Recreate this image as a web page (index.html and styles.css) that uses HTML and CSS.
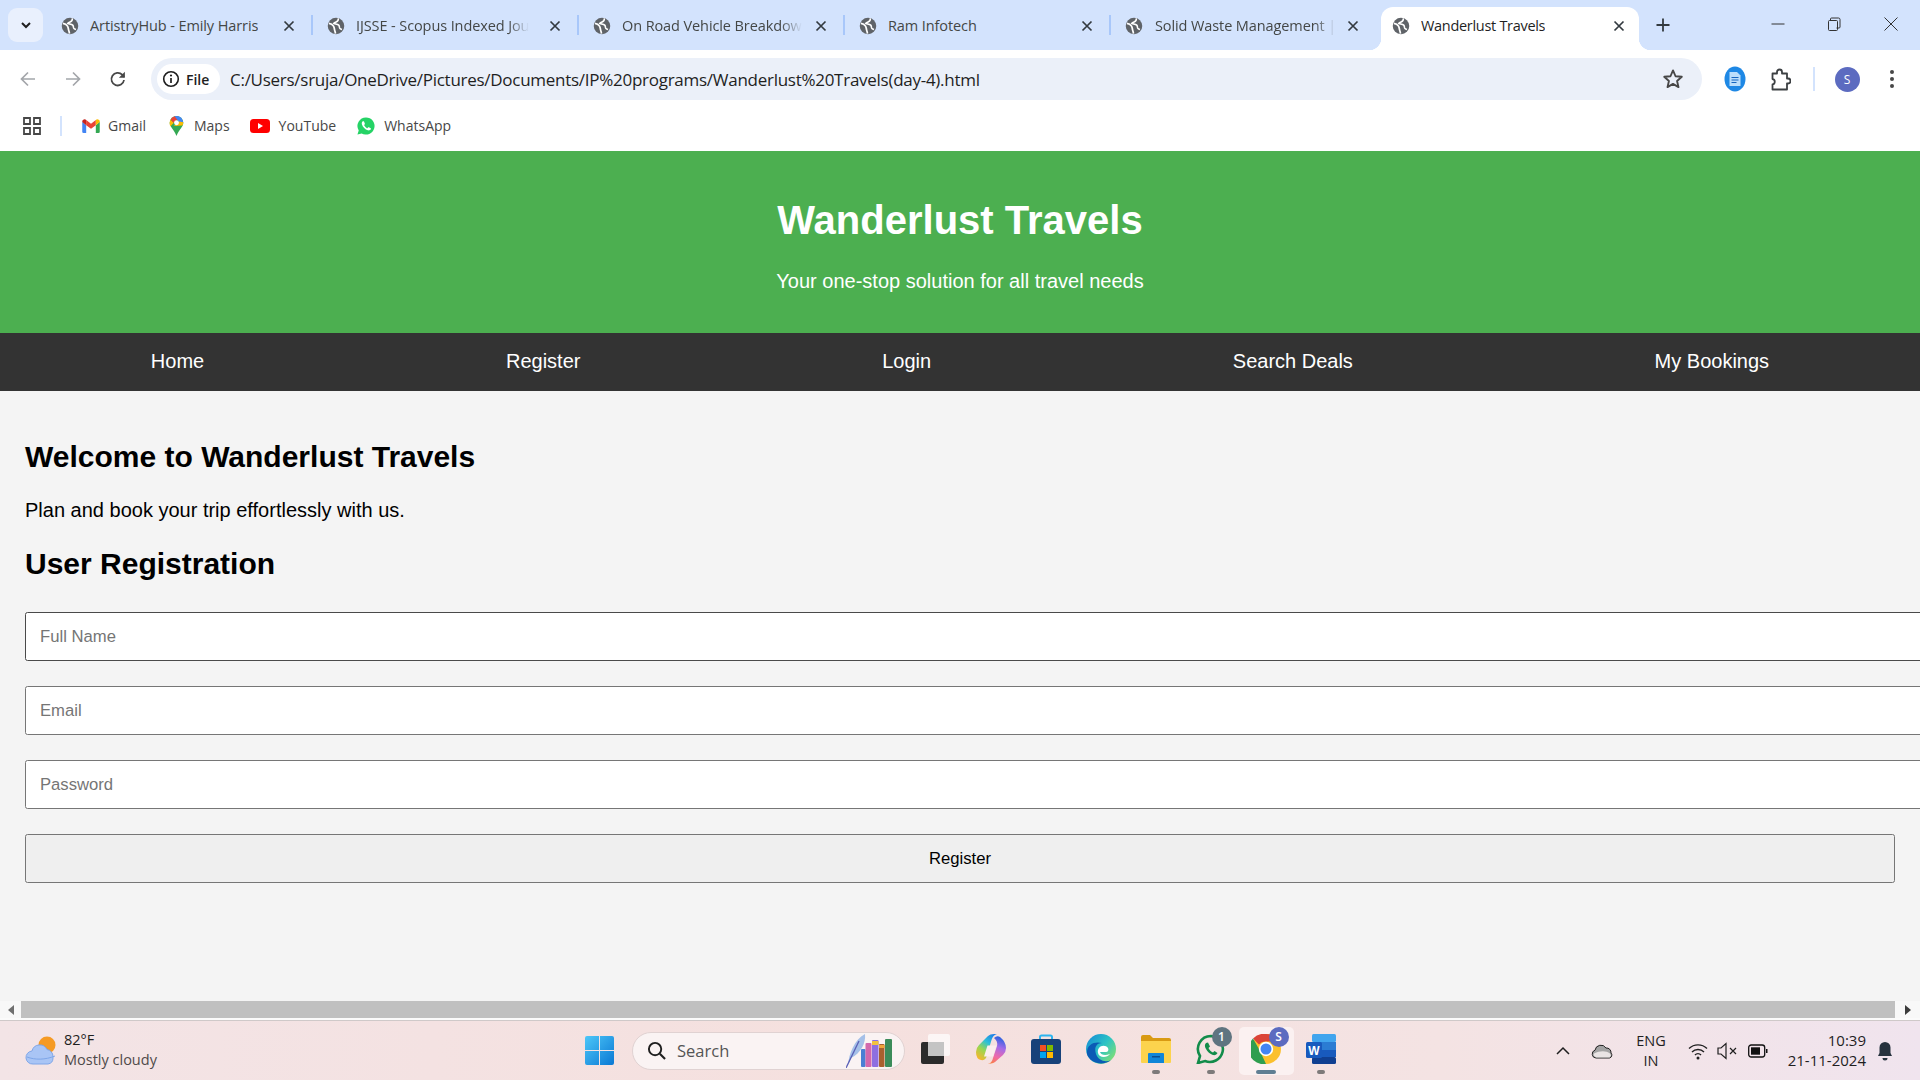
FILE: index.html
```html
<!DOCTYPE html>
<html lang="en">
<head>
<meta charset="utf-8">
<title>Wanderlust Travels</title>
<link rel="stylesheet" href="styles.css">
</head>
<body>
<svg class="sprite" aria-hidden="true">
  <symbol id="globe" viewBox="0 0 24 24">
    <circle cx="12" cy="12" r="11" fill="#5f6368"/>
    <path d="M2.500 8.500c3 .2 5 1.600 6.200 3.600 1 1.700 1 3.400 1.400 5 .3 1.400 1 3 1.200 5" fill="none" stroke="#fff" stroke-width="2.300"/>
    <path d="M15 1.800c.4 2.200-.6 3.700-2.300 4.600-1.500.8-3.200 1-3.700 2.300 2.500.8 5.200.8 6.600 2.200 1 1 .8 2.600 1.300 3.800.7 1.200 2 1.600 3.100 2" fill="none" stroke="#fff" stroke-width="2.100"/>
  </symbol>
  <symbol id="x" viewBox="0 0 12 12">
    <path d="M1.500 1.500l9 9m0-9l-9 9" stroke="#333a40" stroke-width="1.700" fill="none"/>
  </symbol>
</svg>

<div class="tabbar">
  <div class="tab-menu">
    <svg class="ico-10" viewBox="0 0 12 12"><path d="M2 4l4 4 4-4" fill="none" stroke="#1f1f1f" stroke-width="2"/></svg>
  </div>
  <div class="tab">
    <svg class="globe"><use href="#globe"/></svg><span class="tab-title">ArtistryHub - Emily Harris</span><svg class="tab-x"><use href="#x"/></svg>
  </div>
  <div class="tab">
    <svg class="globe"><use href="#globe"/></svg><span class="tab-title fade">IJSSE - Scopus Indexed Jou</span><svg class="tab-x"><use href="#x"/></svg>
  </div>
  <div class="tab">
    <svg class="globe"><use href="#globe"/></svg><span class="tab-title fade">On Road Vehicle Breakdow</span><svg class="tab-x"><use href="#x"/></svg>
  </div>
  <div class="tab">
    <svg class="globe"><use href="#globe"/></svg><span class="tab-title">Ram Infotech</span><svg class="tab-x"><use href="#x"/></svg>
  </div>
  <div class="tab no-sep">
    <svg class="globe"><use href="#globe"/></svg><span class="tab-title fade">Solid Waste Management |</span><svg class="tab-x"><use href="#x"/></svg>
  </div>
  <div class="tab tab-active">
    <svg class="globe"><use href="#globe"/></svg><span class="tab-title">Wanderlust Travels</span><svg class="tab-x"><use href="#x"/></svg>
  </div>
  <div class="new-tab">
    <svg class="ico-14" viewBox="0 0 14 14"><path d="M7 .5v13M.5 7h13" stroke="#333a40" stroke-width="1.800" fill="none"/></svg>
  </div>
  <div class="win-controls">
    <div class="win-btn"><svg class="ico-14" viewBox="0 0 14 14"><path d="M.500 7h13" stroke="#333" stroke-width="1"/></svg></div>
    <div class="win-btn"><svg class="ico-14" viewBox="0 0 14 14"><path d="M1.500 4.500a1 1 0 011-1h7a1 1 0 011 1v8a1 1 0 01-1 1h-7a1 1 0 01-1-1zM3.500 3.500v-1.500a1 1 0 011-1h7a1.500 1.500 0 011.500 1.500v7.500a1 1 0 01-1 1h-2.500" fill="none" stroke="#333" stroke-width="1"/></svg></div>
    <div class="win-btn"><svg class="ico-14" viewBox="0 0 14 14"><path d="M.500.500l13 13m0-13l-13 13" stroke="#333" stroke-width="1" fill="none"/></svg></div>
  </div>
</div>

<div class="toolbar">
  <div class="tool-btn"><svg class="ico-18" viewBox="0 0 18 18"><path d="M16 9H3m6-6.500L2.500 9 9 15.500" fill="none" stroke="#a3a6aa" stroke-width="1.700"/></svg></div>
  <div class="tool-btn"><svg class="ico-18" viewBox="0 0 18 18"><path d="M2 9h13M9 2.500L15.500 9 9 15.500" fill="none" stroke="#a3a6aa" stroke-width="1.700"/></svg></div>
  <div class="tool-btn"><svg class="ico-18" viewBox="0 0 18 18"><path d="M15 10a6.300 6.300 0 11-1.800-5.300L15.200 6.800" fill="none" stroke="#474747" stroke-width="1.800"/><path d="M15.900 1.800v6h-6z" fill="#474747"/></svg></div>
  <div class="omnibox">
    <div class="chip">
      <svg class="ico-18" viewBox="0 0 18 18"><circle cx="9" cy="9" r="7.300" fill="none" stroke="#1f1f1f" stroke-width="1.600"/><path d="M9 8v5" stroke="#1f1f1f" stroke-width="1.700"/><circle cx="9" cy="5.500" r="1.100" fill="#1f1f1f"/></svg>
      <span class="chip-text">File</span>
    </div>
    <span class="url">C:/Users/sruja/OneDrive/Pictures/Documents/IP%20programs/Wanderlust%20Travels(day-4).html</span>
    <svg class="star" viewBox="0 0 20 20"><path d="M10 2.200l2.300 5.300 5.700.5-4.300 3.800 1.300 5.600-5-3-5 3 1.300-5.600L2 8l5.700-.5z" fill="none" stroke="#474747" stroke-width="1.700" stroke-linejoin="round"/></svg>
  </div>
  <div class="tool-btn wide"><svg class="ext-doc" viewBox="0 0 22 26"><ellipse cx="11" cy="13" rx="10.500" ry="12.500" fill="#1e88e5"/><path d="M5.500 6h7.500l3.500 3.500V20h-11z" fill="#bbdefb"/><path d="M7.500 11.500h7M7.500 14h7M7.500 16.500h5" stroke="#1565c0" stroke-width="1.200"/></svg></div>
  <div class="tool-btn wide"><svg class="ext-puzzle" viewBox="0 0 20 24"><path d="M1.500 6.500h4.500v-1.500a2.500 2.500 0 015 0v1.500h5v5h1a2.500 2.500 0 010 5h-1v6h-14.500v-5a2.800 2.800 0 000-5.500z" fill="none" stroke="#3c4043" stroke-width="1.800" stroke-linejoin="round"/></svg></div>
  <div class="tool-sep"></div>
  <div class="tool-btn wide"><span class="avatar">S</span></div>
  <div class="tool-btn menu"><svg class="ext-menu" viewBox="0 0 6 20"><circle cx="3" cy="3" r="2" fill="#474747"/><circle cx="3" cy="10" r="2" fill="#474747"/><circle cx="3" cy="17" r="2" fill="#474747"/></svg></div>
</div>

<div class="bookmarks">
  <svg class="apps" viewBox="0 0 18 18"><path d="M1 1h6v6H1zM11 1h6v6h-6zM1 11h6v6H1zM11 11h6v6h-6z" fill="none" stroke="#474747" stroke-width="1.800"/></svg>
  <div class="bm-sep"></div>
  <div class="bm bm-gmail">
    <svg class="bm-ico" viewBox="0 0 20 16"><path d="M0 3v11.500A1.500 1.500 0 001.500 16H4.500V7z" fill="#4285f4"/><path d="M20 3v11.500a1.500 1.500 0 01-1.500 1.500H15.500V7z" fill="#34a853"/><path d="M15.500 1L10 5.500 4.500 1v6L10 11l5.500-4z" fill="#ea4335"/><path d="M0 3c0-2.500 3-3.500 4.500-2v6L0 3.500z" fill="#c5221f"/><path d="M20 3c0-2.500-3-3.500-4.500-2v6L20 3.500z" fill="#fbbc04"/></svg>
    <span>Gmail</span>
  </div>
  <div class="bm bm-maps">
    <svg class="bm-ico-maps" viewBox="0 0 16 22"><path d="M8 0a7.500 7.500 0 00-7.500 7.500c0 4.500 4.800 7.500 7.500 14.500 2.700-7 7.500-10 7.500-14.500A7.500 7.500 0 008 0z" fill="#34a853"/><path d="M1.500 4L5 7.500l-3.800 4C.7 10.400.5 9 .5 7.500c0-1.300.4-2.500 1-3.500z" fill="#fbbc04"/><path d="M1.500 4A7.500 7.500 0 016 .3L10 3.500 5 7.500z" fill="#ea4335"/><path d="M6 .3A7.500 7.500 0 0115.500 7L11 6.500 8 3z" fill="#4285f4"/><path d="M15.500 7c0 1.300-.4 2.500-1 3.500L5 11l6-5z" fill="#fbbc04"/><circle cx="8" cy="7.500" r="2.700" fill="#fff"/></svg>
    <span>Maps</span>
  </div>
  <div class="bm bm-yt">
    <svg class="bm-ico-yt" viewBox="0 0 20 14"><rect width="20" height="14" rx="3.500" fill="#f00"/><path d="M8 4l5 3-5 3z" fill="#fff"/></svg>
    <span>YouTube</span>
  </div>
  <div class="bm">
    <svg class="bm-ico-wa" viewBox="0 0 20 20"><path d="M10 .5a9.500 9.500 0 00-8.100 14.400L.5 19.500l4.700-1.300A9.500 9.500 0 1010 .5z" fill="#25d366"/><path d="M6.500 4.800c-1 .8-1.500 2-1 3.500 1 3 3.500 5.500 6.500 6.500 1.500.4 2.800-.2 3.400-1.200.3-.6.2-1-.2-1.200l-2-1c-.4-.2-.7 0-1 .4-.5.700-.8.700-1.500.300-1.200-.7-2-1.500-2.600-2.600-.3-.6-.2-.9.300-1.300.4-.4.5-.700.3-1.100l-.9-2c-.3-.500-.8-.5-1.300-.3z" fill="#fff"/></svg>
    <span>WhatsApp</span>
  </div>
</div>

<div class="page">
  <div class="doc">
    <header class="site-header">
      <h1>Wanderlust Travels</h1>
      <p>Your one-stop solution for all travel needs</p>
    </header>
    <nav class="site-nav">
      <a>Home</a><a>Register</a><a>Login</a><a>Search Deals</a><a>My Bookings</a>
    </nav>
    <main class="content">
      <h2 class="welcome">Welcome to Wanderlust Travels</h2>
      <p class="lead">Plan and book your trip effortlessly with us.</p>
      <h2 class="reg">User Registration</h2>
      <form class="form">
        <input class="field field-focus" type="text" placeholder="Full Name">
        <input class="field" type="email" placeholder="Email">
        <input class="field" type="password" placeholder="Password">
        <button class="submit" type="button">Register</button>
      </form>
    </main>
  </div>
</div>

<div class="hscroll">
  <div class="sb-arrow"><svg class="sb-ico" viewBox="0 0 6 10"><path d="M6 0v10L0 5z" fill="#6f6f6f"/></svg></div>
  <div class="sb-thumb"></div>
  <div class="sb-arrow sb-right"><svg class="sb-ico" viewBox="0 0 6 10"><path d="M0 0v10l6-5z" fill="#3c3c3c"/></svg></div>
</div>

<footer class="taskbar">
  <div class="weather">
    <svg class="weather-ico" viewBox="0 0 32 30"><circle cx="22" cy="9" r="8.500" fill="#f59a23"/><path d="M8 28a6.500 6.500 0 01-1-13 8 8 0 0115-1.500 7 7 0 016 7v1.500a6 6 0 01-5 6z" fill="#a9c5f5" stroke="#7ea6e8" stroke-width="1"/><path d="M2 21c8 3 18 3 28-1" fill="none" stroke="#7ea6e8" stroke-width="1"/></svg>
    <div class="weather-text"><span class="temp">82°F</span><span class="cond">Mostly cloudy</span></div>
  </div>
  <svg class="start" viewBox="0 0 29 29">
    <defs><linearGradient id="wing" x1="0" y1="0" x2="1" y2="1"><stop offset="0" stop-color="#4dc7f8"/><stop offset="1" stop-color="#0a78d4"/></linearGradient></defs>
    <path d="M2 0h12v14H0V2a2 2 0 012-2zM15 0h12a2 2 0 012 2v12H15zM0 15h14v14H2a2 2 0 01-2-2zM15 15h14v12a2 2 0 01-2 2H15z" fill="url(#wing)"/>
  </svg>
  <div class="searchbox">
    <svg class="search-ico" viewBox="0 0 20 20"><circle cx="8.500" cy="8.500" r="6.500" fill="none" stroke="#1f1f1f" stroke-width="2"/><path d="M13.500 13.500L19 19" stroke="#1f1f1f" stroke-width="2.200"/></svg>
    <span class="search-text">Search</span>
    <svg class="search-art" viewBox="0 0 46 34">
      <path d="M2 31C3 20 8 6 19 0c1 9-4 19-14 24z" fill="#a5c0e8"/><path d="M0 34L13 7" stroke="#5a5fb5" stroke-width="1.300" fill="none"/>
      <rect x="15" y="15" width="4.500" height="18" rx="1" fill="#4a7fd4"/><rect x="19.500" y="9" width="6" height="24" rx="1" fill="#d268ad"/>
      <rect x="26" y="6" width="6.500" height="27" rx="1" fill="#8e6fe0"/><rect x="26" y="7" width="6.500" height="4" fill="#f2c23e"/><rect x="33" y="10" width="5.500" height="23" rx="1" fill="#a8602e"/><rect x="33" y="11" width="5.500" height="3" fill="#f0a43a"/><rect x="39" y="5" width="7" height="28" rx="1" fill="#3b8c5a"/>
    </svg>
  </div>
  <div class="apps-row">
    <div class="app">
      <svg class="app-ico" viewBox="0 0 30 30"><rect x="0" y="8" width="23" height="22" rx="2" fill="#2b2b2b"/><rect x="7" y="0" width="22" height="22" rx="2" fill="#fff" fill-opacity=".7"/><rect x="7" y="8" width="16" height="14" fill="#c4c4c4"/></svg>
    </div>
    <div class="app">
      <svg class="app-ico" viewBox="0 0 30 30"><defs><linearGradient id="cp1" x1=".8" y1="0" x2=".2" y2="1"><stop offset="0" stop-color="#1f7fe8"/><stop offset=".35" stop-color="#2cc0d8"/><stop offset=".65" stop-color="#9ad650"/><stop offset="1" stop-color="#f9b52c"/></linearGradient><linearGradient id="cp2" x1=".6" y1="0" x2=".3" y2="1"><stop offset="0" stop-color="#2a62e0"/><stop offset=".35" stop-color="#a46be8"/><stop offset=".7" stop-color="#f06aa8"/><stop offset="1" stop-color="#f9803c"/></linearGradient></defs><path d="M12 2Q14 0 18 0h3q-4 1-5.500 6L11 21q-1 6-6 5-5-1-5-8 0-4 3-7l5-5z" fill="url(#cp1)"/><path d="M18 4q3-3 6-1 6 5 6 11 0 4-3 7l-8 7q-3 2-10 2h3q4-1 5-6l4-12q1-5-3-8z" fill="url(#cp2)"/><path d="M11.500 11.500h9l-3.500 11h-9z" fill="#fbeeee"/></svg>
    </div>
    <div class="app">
      <svg class="app-ico" viewBox="0 0 30 30"><path d="M9 6V3a1.500 1.500 0 011.500-1.500h9A1.500 1.500 0 0121 3v3" fill="none" stroke="#2db4ef" stroke-width="2"/><rect x="0" y="5" width="30" height="25" rx="3" fill="#17427a"/><rect x="9" y="11" width="6" height="6" fill="#f25022"/><rect x="16" y="11" width="6" height="6" fill="#7fba00"/><rect x="9" y="18" width="6" height="6" fill="#00a4ef"/><rect x="16" y="18" width="6" height="6" fill="#ffb900"/></svg>
    </div>
    <div class="app">
      <svg class="app-ico" viewBox="0 0 30 30"><defs><linearGradient id="ed1" x1="0" y1="0" x2="1" y2=".8"><stop offset="0" stop-color="#1487d8"/><stop offset=".55" stop-color="#2cc4c4"/><stop offset="1" stop-color="#84e070"/></linearGradient></defs><circle cx="15" cy="15" r="15" fill="url(#ed1)"/><path d="M1 20C0 10 9 7 16 9c-6 0-8 5-6 11 2 6 9 9 15 6-7 6-21 4-24-6z" fill="#0b5bb5"/><path d="M13 14c2-3 7-3 9 0 1 2 0 4-2 4h-6c1 3 5 4 10 2-3 4-11 4-12-1-.5-2 0-4 1-5z" fill="#fff"/></svg>
    </div>
    <div class="app">
      <svg class="app-ico" viewBox="0 0 30 30"><path d="M0 3a2 2 0 012-2h7l3 3h16a2 2 0 012 2v4H0z" fill="#d99a12"/><path d="M0 7h30v21a1 1 0 01-1 1H1a1 1 0 01-1-1z" fill="#fcd34d"/><path d="M8 19h14a1 1 0 011 1v9H7v-9a1 1 0 011-1z" fill="#1086d8"/><rect x="11" y="22" width="8" height="1.500" fill="#0b4e8f"/></svg>
      <span class="dot"></span>
    </div>
    <div class="app">
      <svg class="app-ico" viewBox="0 0 30 30"><path d="M15 2a13 13 0 00-11 20L2 29l7-2A13 13 0 1015 2z" fill="none" stroke="#128c4a" stroke-width="2.600"/><path d="M10 9c-1.500 1.500-1.500 3.500 0 6 1.500 3 4 5 7 6 2 .5 4-.5 4.500-2l-3-2-1.500 1.500c-2-1-3.500-2.500-4.500-4.500l1.500-1.500-2-4z" fill="#128c4a"/></svg>
      <span class="badge">1</span>
      <span class="dot"></span>
    </div>
    <div class="app app-active">
      <svg class="app-ico" viewBox="0 0 30 30"><circle cx="15" cy="15" r="15" fill="#fbc02d"/><path d="M15 0a15 15 0 0113 7.500H15A7.500 7.500 0 008 10.500L2 4.500A15 15 0 0115 0z" fill="#db4437"/><path d="M2 4.500l6.500 11.500 6.500 14A15 15 0 012 4.500z" fill="#2e9e4f"/><circle cx="15" cy="15" r="7.200" fill="#fff"/><circle cx="15" cy="15" r="5.500" fill="#4285f4"/></svg>
      <span class="badge badge-s">S</span>
      <span class="dot dot-long"></span>
    </div>
    <div class="app">
      <svg class="app-ico" viewBox="0 0 30 30"><rect x="6" y="0" width="24" height="8" rx="1.500" fill="#41a5ee"/><rect x="6" y="8" width="24" height="8" fill="#2b7cd3"/><rect x="6" y="16" width="24" height="7" fill="#185abd"/><rect x="6" y="23" width="24" height="7" rx="1.500" fill="#103f91"/><rect x="0" y="8" width="16" height="16" rx="1.500" fill="#185abd"/><text class="word-w" x="8" y="20.500" text-anchor="middle">W</text></svg>
      <span class="dot"></span>
    </div>
  </div>
  <div class="tray">
    <div class="tray-slot s-caret"><svg class="ico-14" viewBox="0 0 14 14"><path d="M1 10l6-6 6 6" fill="none" stroke="#1f1f1f" stroke-width="1.500"/></svg></div>
    <div class="tray-slot s-cloud"><svg class="tray-cloud" viewBox="0 0 22 16"><path d="M5 15a4 4 0 01-1-7.800 6 6 0 0111-2.200 4.500 4.500 0 015 5 3 3 0 01-1.500 5z" fill="#a3a3a3" stroke="#222" stroke-width="1"/><path d="M3 10.500c6-3 12-3 16 0l1 2-1.500 2H5l-2.500-2z" fill="#e9e4e4"/></svg></div>
    <div class="tray-slot s-lang"><span>ENG</span><span>IN</span></div>
    <div class="tray-slot s-wifi"><svg class="tray-20" viewBox="0 0 20 18"><path d="M1 6.500a13 13 0 0118 0M4 10a8.500 8.500 0 0112 0M7 13a4 4 0 016 0" fill="none" stroke="#1f1f1f" stroke-width="1.400"/><circle cx="10" cy="16" r="1.500" fill="#1f1f1f"/></svg></div>
    <div class="tray-slot s-vol"><svg class="tray-20" viewBox="0 0 20 18"><path d="M1 6h3l5-4.500v15L4 12H1z" fill="none" stroke="#1f1f1f" stroke-width="1.200"/><path d="M13 6l6 6m0-6l-6 6" stroke="#1f1f1f" stroke-width="1.200"/></svg></div>
    <div class="tray-slot s-batt"><svg class="tray-20" viewBox="0 0 20 14"><rect x=".7" y="1" width="16" height="12" rx="2.500" fill="none" stroke="#111" stroke-width="1.300"/><rect x="3" y="3.300" width="9" height="7.400" fill="#111"/><path d="M18 5h1.500v4H18z" fill="#111"/></svg></div>
    <div class="clock"><span>10:39</span><span>21-11-2024</span></div>
    <div class="tray-slot s-bell"><svg class="tray-bell" viewBox="0 0 16 20"><path d="M8 1a5.500 5.500 0 00-5.500 5.500V12L1 15h14l-1.500-3V6.500A5.500 5.500 0 008 1z" fill="#26323e"/><path d="M5.500 17a2.500 2.500 0 005 0z" fill="#26323e"/></svg></div>
  </div>
</footer>
</body>
</html>
```

FILE: styles.css
```css
* { box-sizing: border-box; }
html, body { margin: 0; height: 100%; overflow: hidden; }
body {
  display: flex;
  flex-direction: column;
  height: 1080px;
  font-family: "Liberation Sans", Arial, sans-serif;
  background: #fff;
}
svg { display: block; flex: none; }
.sprite { position: absolute; width: 0; height: 0; }
.ico-10 { width: 12px; height: 12px; }
.ico-14 { width: 14px; height: 14px; }
.ico-18 { width: 18px; height: 18px; }

/* tab strip */
.tabbar {
  display: flex;
  align-items: flex-end;
  height: 50px;
  padding-left: 8px;
  background: #d3e3fd;
  font-family: "Open Sans", sans-serif;
}
.tab-menu {
  display: flex; align-items: center; justify-content: center;
  width: 35px; height: 34px;
  margin: 0 4px 8px 0;
  background: #e9f0fd;
  border-radius: 9px;
}
.tab {
  position: relative;
  display: flex; align-items: center;
  width: 266px; height: 43px;
  padding: 0 18px 6px 14px;
  color: #444746;
  font-size: 14.500px;
}
.tab::after {
  content: "";
  position: absolute;
  right: 0; top: 8px;
  width: 2px; height: 20px;
  background: #a8c7fa;
}
.no-sep::after, .tab-active::after { display: none; }
.globe { width: 18px; height: 18px; margin-right: 11px; }
.tab-title { min-width: 0; overflow: hidden; white-space: nowrap; letter-spacing: -.1px; }
.no-sep .globe { margin-right: 12px; }
.fade {
  -webkit-mask-image: linear-gradient(90deg, #000 88%, transparent 100%);
  mask-image: linear-gradient(90deg, #000 88%, transparent 100%);
}
.tab-x { width: 12px; height: 12px; margin-left: auto; }
.tab-active {
  width: 258px;
  margin: 0 4px;
  padding: 0 14px 6px 11px;
  background: #fff;
  border-radius: 12px 12px 0 0;
  color: #1f1f1f;
}
.tab-active .tab-title { letter-spacing: -.3px; }
.tab-active::before {
  content: "";
  position: absolute;
  left: -12px; right: -12px; bottom: 0;
  height: 12px;
  background:
    radial-gradient(circle at 0 0, #d3e3fd 12px, #fff 12.5px) 0 0 / 12px 12px no-repeat,
    radial-gradient(circle at 100% 0, #d3e3fd 12px, #fff 12.5px) 100% 0 / 12px 12px no-repeat;
  z-index: 0;
}
.tab-active > * { position: relative; z-index: 1; }
.new-tab {
  display: flex; align-items: center; justify-content: center;
  width: 32px; height: 43px;
  margin-left: 4px;
  padding-bottom: 8px;
}
.win-controls { display: flex; margin-left: auto; height: 50px; align-self: flex-start; padding-right: 1px; }
.win-btn { display: flex; align-items: center; justify-content: center; width: 56.500px; height: 50px; padding-bottom: 2px; }

/* toolbar */
.toolbar {
  display: flex;
  align-items: flex-start;
  height: 58px;
  padding: 8px 6px 0 5px;
  background: #fff;
  border-radius: 9px 9px 0 0;
  position: relative;
}
.tool-btn { display: flex; align-items: center; justify-content: center; width: 45px; height: 42px; flex: none; }
.tool-btn.wide { width: 46px; }
.tool-btn.menu { width: 44px; }
.omnibox {
  flex: 1; min-width: 0;
  display: flex; align-items: center;
  height: 42px;
  margin: 0 10px 0 11px;
  padding: 0 18px 0 6px;
  background: #ebf0f9;
  border-radius: 21px;
}
.chip {
  display: flex; align-items: center; gap: 6px;
  width: 63px; height: 30px;
  padding-left: 5px;
  background: #fff;
  border-radius: 15px;
  font-family: "Open Sans", sans-serif;
  font-size: 14px; font-weight: 600; color: #1f1f1f;
}
.url {
  flex: 1;
  margin-left: 10px;
  font-family: "Open Sans", sans-serif;
  font-size: 17px;
  color: #1f1f1f;
  white-space: nowrap;
  letter-spacing: -.27px;
}
.star { width: 22px; height: 22px; }
.ext-doc { width: 22px; height: 26px; }
.ext-puzzle { width: 20px; height: 24px; }
.ext-menu { width: 6px; height: 20px; }
.tool-sep { width: 2px; height: 24px; margin: 9px 9px 0; background: #d3e3fd; }
.avatar {
  display: flex; align-items: center; justify-content: center;
  width: 25px; height: 25px;
  background: #5c6bc0;
  border-radius: 50%;
  color: #fff;
  font-family: "Open Sans", sans-serif;
  font-size: 12px;
}

/* bookmarks */
.bookmarks {
  display: flex; align-items: center;
  height: 43px;
  padding: 0 0 8px 23px;
  background: #fff;
  font-family: "Open Sans", sans-serif;
  font-size: 14px;
  color: #474747;
}
.apps { width: 18px; height: 18px; }
.bm-sep { width: 2px; height: 20px; margin: 0 20px 0 19px; background: #d3e3fd; }
.bm { display: flex; align-items: center; gap: 9px; }
.bm-gmail { gap: 8px; margin-right: 23px; }
.bm-maps { gap: 10px; margin-right: 20px; }
.bm-yt { margin-right: 21px; }
.bm-ico { width: 18px; height: 14px; }
.bm-ico-maps { width: 15px; height: 20px; }
.bm-ico-yt { width: 20px; height: 14px; }
.bm-ico-wa { width: 18px; height: 18px; }

/* page */
.page { flex: none; height: 850px; overflow: hidden; background: #f4f4f4; }
.doc { width: 1920px; }
.site-header {
  padding: 20px;
  background: #4caf50;
  color: #fff;
  text-align: center;
}
.site-header h1 { margin: 25.800px 0 26.800px; font-size: 40px; line-height: 46px; font-weight: 700; }
.site-header p { margin: 0 0 20.400px; font-size: 20px; line-height: 23px; }
.site-nav {
  display: flex;
  justify-content: space-around;
  padding: 17.500px 0;
  background: #333;
}
.site-nav a { color: #fff; font-size: 20px; line-height: 23px; }
.content { padding: 24px 25px 0; color: #000; }
.content h2 { margin: 0; font-size: 30px; line-height: 34px; font-weight: 700; }
.welcome { padding-top: 25px; }
.lead { margin: 25px 0 0; font-size: 20px; line-height: 23px; }
.content .reg { margin-top: 25px; }
.form { display: flex; flex-direction: column; align-items: flex-start; gap: 25px; margin-top: 31px; }
.field {
  box-sizing: content-box;
  flex: none;
  width: 100%;
  height: 20px;
  padding: 14.500px 14px 12.500px;
  border: 1.250px solid #767676;
  border-radius: 2.500px;
  background: #fff;
  font: 16.670px "Liberation Sans", Arial, sans-serif;
  outline: none;
}
.field-focus { border-color: #4a4a4a; }
.field::placeholder { color: #757575; opacity: 1; }
.submit {
  width: 100%;
  height: 49px;
  padding: 2px 0 0;
  border: 1.250px solid #767676;
  border-radius: 2.500px;
  background: #efefef;
  color: #000;
  font: 16.670px "Liberation Sans", Arial, sans-serif;
}

/* horizontal scrollbar */
.hscroll { display: flex; flex: none; height: 19px; background: #f8f8f8; border-bottom: 2px solid #fbfbfb; }
.sb-arrow { display: flex; align-items: center; justify-content: center; width: 21px; flex: none; }
.sb-right { width: 25px; }
.sb-thumb { flex: none; width: 1874px; background: #c0c0c0; }
.sb-ico { width: 6px; height: 10px; }

/* taskbar */
.taskbar {
  display: flex; align-items: center;
  flex: none;
  height: 60px;
  background: linear-gradient(90deg, #f3e4e6 0%, #f5e0de 45%, #f4e3e3 75%, #f0e4ee 100%);
  border-top: 1px solid #cfc9c9;
  font-family: "Open Sans", sans-serif;
  color: #1f1f1f;
}
.weather { display: flex; align-items: center; width: 585px; padding-left: 25px; gap: 7px; flex: none; }
.weather-ico { width: 32px; height: 30px; }
.weather-text { display: flex; flex-direction: column; font-size: 14.500px; line-height: 20px; padding-bottom: 2px; }
.cond { color: #4f4a4a; }
.start { width: 29px; height: 29px; }
.searchbox {
  display: flex; align-items: center;
  flex: none;
  width: 273px; height: 38px;
  margin-left: 18px;
  padding: 0 12px 0 14px;
  background: #faf3f3;
  border: 1px solid #e0d2d2;
  border-radius: 19px;
}
.search-ico { width: 19px; height: 19px; }
.search-text { margin-left: 11px; font-size: 16.500px; color: #555; flex: 1; }
.search-art { width: 46px; height: 34px; }
.apps-row { display: flex; margin-left: 3.500px; }
.app {
  position: relative;
  display: flex; align-items: center; justify-content: center;
  width: 55px; height: 48px;
  padding-bottom: 3px;
}
.app-ico { width: 30px; height: 30px; }
.app-active { background: #fbf1f1; border-radius: 5px; }
.dot {
  position: absolute;
  left: 50%; bottom: 1px;
  width: 8px; height: 4px;
  margin-left: -4px;
  background: #7d7a7a;
  border-radius: 2px;
}
.dot-long { width: 20px; margin-left: -10px; background: #5f7e93; }
.badge {
  position: absolute;
  top: 0; right: 7px;
  display: flex; align-items: center; justify-content: center;
  width: 20px; height: 20px;
  background: #5f7480;
  border-radius: 50%;
  color: #fff;
  font-size: 12px; font-weight: 600;
}
.badge-s { background: #5c6bc0; right: 5px; }
.word-w { font: 700 12px "Liberation Sans", sans-serif; fill: #fff; }
.tray { display: flex; align-items: center; margin-left: auto; height: 100%; padding-right: 20px; }
.tray-slot { display: flex; align-items: center; justify-content: center; flex: none; }
.s-caret { width: 30px; }
.s-cloud { width: 48px; }
.s-lang { width: 50px; flex-direction: column; font-size: 14.500px; line-height: 20px; }
.s-wifi { width: 28px; margin-left: 8px; }
.s-vol { width: 30px; }
.s-batt { width: 32px; }
.s-bell { width: 30px; margin-left: 4px; }
.tray-cloud { width: 22px; height: 16px; }
.tray-20 { width: 20px; height: 18px; }
.tray-bell { width: 16px; height: 20px; }
.clock { display: flex; flex-direction: column; align-items: flex-end; width: 92px; font-size: 15px; line-height: 20px; padding-bottom: 1px; }
```
